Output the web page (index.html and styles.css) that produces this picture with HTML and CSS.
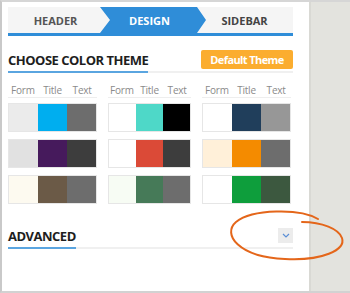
FILE: index.html
```html
<!DOCTYPE html>
<html lang="en">
<head>
  <meta charset="UTF-8">
  <title>Theme Settings</title>
  <link rel="stylesheet" href="styles.css">
</head>
<body>
  <div class="frame">

    <!-- SETTINGS PANEL -->
    <div class="panel">

      <!-- Step tabs -->
      <div class="tabs">
        <div class="tab tab-header">HEADER</div>
        <div class="tab tab-design">DESIGN</div>
        <div class="tab tab-sidebar">SIDEBAR</div>
      </div>

      <!-- Color theme -->
      <div class="sec-head">
        <div class="sec-title">CHOOSE COLOR THEME</div>
        <button class="default-btn">Default Theme</button>
      </div>

      <div class="themes">
        <div class="theme-group">
          <div class="theme-labels"><span>Form</span><span>Title</span><span>Text</span></div>
          <div class="swatch-row"><i style="background:#ebebeb"></i><i style="background:#00aeef"></i><i style="background:#6d6d6d"></i></div>
          <div class="swatch-row"><i style="background:#e1e1e1"></i><i style="background:#461a5c"></i><i style="background:#3d3d3d"></i></div>
          <div class="swatch-row"><i style="background:#fdfaf0"></i><i style="background:#6b5a47"></i><i style="background:#6d6d6d"></i></div>
        </div>
        <div class="theme-group">
          <div class="theme-labels"><span>Form</span><span>Title</span><span>Text</span></div>
          <div class="swatch-row"><i style="background:#ffffff"></i><i style="background:#4ed8c8"></i><i style="background:#000000"></i></div>
          <div class="swatch-row"><i style="background:#ffffff"></i><i style="background:#db4a37"></i><i style="background:#3d3d3d"></i></div>
          <div class="swatch-row"><i style="background:#f7fcf4"></i><i style="background:#467a58"></i><i style="background:#6d6d6d"></i></div>
        </div>
        <div class="theme-group">
          <div class="theme-labels"><span>Form</span><span>Title</span><span>Text</span></div>
          <div class="swatch-row"><i style="background:#ffffff"></i><i style="background:#203e5b"></i><i style="background:#979797"></i></div>
          <div class="swatch-row"><i style="background:#fff0d9"></i><i style="background:#f48b00"></i><i style="background:#6d6d6d"></i></div>
          <div class="swatch-row"><i style="background:#ffffff"></i><i style="background:#0e9e3c"></i><i style="background:#3c583f"></i></div>
        </div>
      </div>

      <!-- Advanced (collapsed) -->
      <div class="sec-head advanced">
        <div class="sec-title">ADVANCED</div>
        <span class="toggle-btn">
          <svg width="8" height="5" viewBox="0 0 8 5"><polyline points="1,1 4,4 7,1" fill="none" stroke="#5b8fd6" stroke-width="1.2"/></svg>
        </span>
      </div>
    </div>

    <!-- grey area beside the panel -->
    <div class="side"></div>

    <!-- hand drawn annotation round the toggle -->
    <svg class="annotation" width="350" height="293" viewBox="0 0 350 293">
      <path d="M318 219 C300 208, 252 209, 236 222 C222 234, 238 257, 285 259 C322 261, 346 250, 342 238 C339 229, 322 222, 302 222"
            fill="none" stroke="#e4661a" stroke-width="2" stroke-linecap="round"/>
    </svg>
  </div>
</body>
</html>
```

FILE: styles.css
```css
/* ------------------------------
   BASIC STYLES
------------------------------ */
* {
  box-sizing: border-box;
  margin: 0;
  padding: 0;
}

body {
  font-family: "Open Sans", "Liberation Sans", sans-serif;
  background: #fff;
  color: #222;
}

.frame {
  position: relative;
  display: flex;
  width: 350px;
  height: 293px;
  border-top: 2px solid #d6d6d6;
  border-left: 2px solid #c9c9c9;
  border-bottom: 2px solid #d2d2d2;
}

/* ------------------------------
   PANEL
------------------------------ */
.panel {
  width: 307px;
  background: #fff;
  padding: 5px 16px 0 6px;
}

.side {
  flex: 1;
  background: #e3e3de;
  border-left: 2px solid #d9d9d4;
}

/* ------------------------------
   TABS
------------------------------ */
.tabs {
  display: flex;
  height: 29px;
  background: #f5f5f5;
  border-bottom: 3px solid #2f8dd8;
}

.tab {
  display: flex;
  align-items: center;
  justify-content: center;
  font-size: 11px;
  font-weight: 700;
  color: #555;
}

.tab-header {
  width: 92px;
  padding-left: 3px;
}

.tab-design {
  width: 106px;
  padding-right: 7px;
  background: #2f8dd8;
  color: #fff;
  clip-path: polygon(0 0, 97px 0, 106px 50%, 97px 100%, 0 100%, 10px 50%);
}

.tab-sidebar {
  flex: 1;
  padding-right: 10px;
  color: #444;
}

/* ------------------------------
   SECTION HEADINGS
------------------------------ */
.sec-head {
  display: flex;
  align-items: center;
  justify-content: space-between;
  height: 25px;
  margin-top: 12px;
  border-bottom: 2px solid #f0f0f0;
}

.sec-title {
  align-self: stretch;
  display: flex;
  align-items: center;
  margin-bottom: -2px;
  border-bottom: 2px solid #5aa5e0;
  font-size: 13px;
  font-weight: 700;
  letter-spacing: -0.5px;
  color: #1e1e1e;
}

.default-btn {
  height: 19px;
  width: 92px;
  border: none;
  border-radius: 2px;
  background: #fbad2f;
  color: #fff;
  font-family: inherit;
  font-size: 11px;
  font-weight: 700;
  letter-spacing: -0.6px;
}

.advanced {
  margin-top: 20px;
}

.toggle-btn {
  display: flex;
  align-items: center;
  justify-content: center;
  width: 15px;
  height: 15px;
  background: #ececec;
}

/* ------------------------------
   COLOR THEMES
------------------------------ */
.themes {
  display: grid;
  grid-template-columns: 89px 83px 89px;
  column-gap: 11px;
}

.theme-labels {
  display: flex;
  padding-top: 10px;
  line-height: 14px;
  border-bottom: 1px solid #eee;
  font-size: 10px;
  letter-spacing: -0.2px;
  color: #8a8a8a;
}

.theme-labels span {
  flex: 1;
  text-align: center;
}

.swatch-row {
  display: flex;
  height: 29px;
  margin-top: 7px;
  border: 1px solid #e6e6e6;
}

.theme-labels + .swatch-row {
  margin-top: 5px;
}

.swatch-row i {
  flex: 1;
}

/* ------------------------------
   ANNOTATION
------------------------------ */
.annotation {
  position: absolute;
  top: -2px;
  left: -2px;
  pointer-events: none;
}
```
